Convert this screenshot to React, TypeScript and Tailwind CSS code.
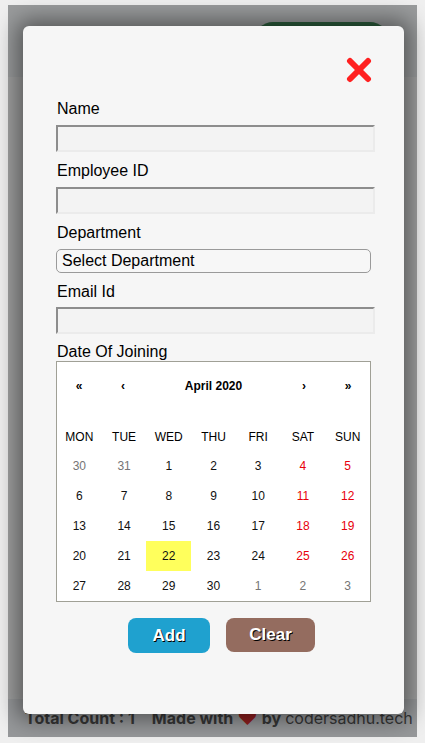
import React from 'react';

const weekDays = ['MON', 'TUE', 'WED', 'THU', 'FRI', 'SAT', 'SUN'];

// April 2020, weeks starting Monday
const days: { d: number; out?: boolean }[] = [
  { d: 30, out: true }, { d: 31, out: true },
  ...Array.from({ length: 30 }, (_, i) => ({ d: i + 1 })),
  { d: 1, out: true }, { d: 2, out: true }, { d: 3, out: true },
];

function CloseIcon() {
  return (
    <svg width="26" height="26" viewBox="0 0 26 26">
      <line x1="4" y1="4" x2="22" y2="22" stroke="#ff2020" strokeWidth="6" strokeLinecap="round" />
      <line x1="22" y1="4" x2="4" y2="22" stroke="#ff2020" strokeWidth="6" strokeLinecap="round" />
    </svg>
  );
}

function Calendar() {
  return (
    <div className="w-[315px] border border-[#a0a096] bg-white text-black font-['Liberation_Sans',Arial,sans-serif]">
      {/* Navigation */}
      <div className="h-[44px] pt-[3px] flex items-center text-[12px] font-bold mb-4">
        <span className="w-[44px] text-center">«</span>
        <span className="w-[44px] text-center">‹</span>
        <span className="flex-1 text-center">April 2020</span>
        <span className="w-[44px] text-center">›</span>
        <span className="w-[44px] text-center">»</span>
      </div>

      {/* Weekdays */}
      <div className="grid grid-cols-7 h-[29px] items-center text-center text-[12px]">
        {weekDays.map((w) => (
          <span key={w}>{w}</span>
        ))}
      </div>

      {/* Days */}
      <div className="grid grid-cols-7">
        {days.map((day, i) => {
          const col = i % 7;
          const weekend = col >= 5;
          const today = !day.out && day.d === 22;
          let color = 'text-[#111]';
          if (day.out) color = 'text-[#757575]';
          else if (weekend) color = 'text-[#e8000b]';
          return (
            <div
              key={i}
              className={`h-[30px] flex items-center justify-center text-[12px] ${color} ${today ? 'bg-[#ffff5c]' : ''}`}
            >
              {day.d}
            </div>
          );
        })}
      </div>
    </div>
  );
}

function TextInput() {
  return (
    <input
      type="text"
      className="block w-[319px] h-[27px] border-2 border-t-[#8d8d8d] border-l-[#8d8d8d] border-r-[#ebebeb] border-b-[#ebebeb] bg-[#f3f3f3] outline-none"
    />
  );
}

function Label({ children, className = '' }: { children: React.ReactNode; className?: string }) {
  return <div className={`h-[18px] leading-[20px] text-[16px] pl-px ${className}`}>{children}</div>;
}

export default function App() {
  return (
    <div className="w-[425px] h-[743px] bg-[#efefef] px-2 pt-[5px] pb-[6px] overflow-hidden font-['Liberation_Sans',Arial,sans-serif]">
      <div className="relative h-full flex flex-col bg-[#f6f7f8]">
        {/* Page header */}
        <div className="h-[72px] bg-[#eceef0] flex justify-end pr-[28px] pt-[17px]">
          <div className="w-[135px] h-[38px] rounded-full bg-[#42915c]" />
        </div>

        {/* Page body */}
        <div className="flex-1" />

        {/* Footer */}
        <div className="h-[38px] bg-[#e6eaed] flex items-center pl-[17px] text-[16px] text-[#555] font-['Inter',sans-serif]">
          <span className="font-bold">Total Count : 1</span>
          <span className="ml-[17px] font-bold">Made with</span>
          <span className="mx-1 text-[#e03030] text-[20px] leading-none">♥</span>
          <span className="font-bold">by</span>
          <span className="ml-1">codersadhu.tech</span>
        </div>

        {/* Overlay */}
        <div className="absolute inset-0 bg-black/35" />

        {/* Modal */}
        <div className="absolute left-[15px] top-[21px] w-[381px] h-[688px] rounded-[6px] bg-[#f6f6f6] shadow-[0_0_22px_6px_rgba(0,0,0,0.45)] pl-[33px] pr-[29px] pt-[31px] text-black">
          <div className="flex justify-end mr-[3px] h-[26px]">
            <CloseIcon />
          </div>

          <Label className="mt-4">Name</Label>
          <div className="mt-2"><TextInput /></div>

          <Label className="mt-[9px]">Employee ID</Label>
          <div className="mt-2"><TextInput /></div>

          <Label className="mt-[9px]">Department</Label>
          <div className="mt-2">
            <div className="w-[315px] h-[24px] border border-[#9a9a9a] rounded-[5px] bg-[#f7f7f7] px-[5px] text-[16px] leading-[22px]">
              Select Department
            </div>
          </div>

          <Label className="mt-[9px]">Email Id</Label>
          <div className="mt-[7px]"><TextInput /></div>

          <Label className="mt-2">Date Of Joining</Label>
          <div className="mt-px">
            <Calendar />
          </div>

          <div className="mt-4 flex ml-[72px]">
            <button className="w-[82px] h-[35px] rounded-[8px] bg-[#1fa1cf] text-white font-bold text-[17px] [text-shadow:1px_1px_0_#000]">
              Add
            </button>
            <button className="ml-4 w-[89px] h-[34px] rounded-[8px] bg-[#946c5f] text-white font-bold text-[17px] [text-shadow:1px_1px_0_#000]">
              Clear
            </button>
          </div>
        </div>
      </div>
    </div>
  );
}
